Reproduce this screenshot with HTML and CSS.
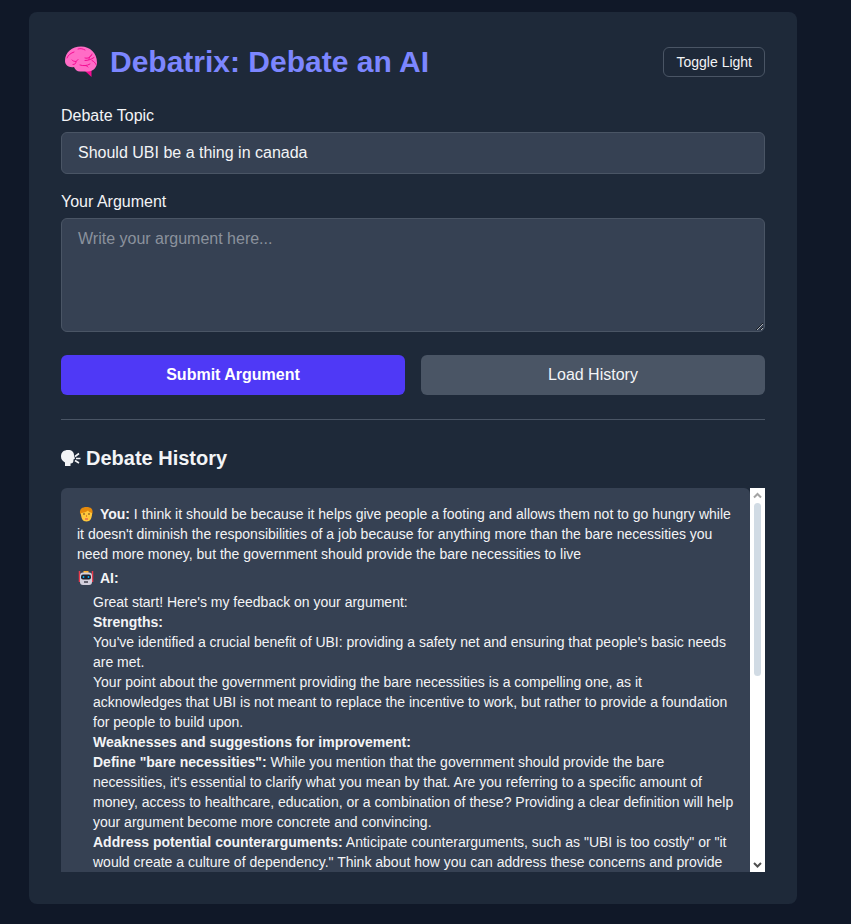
FILE: index.html
```
<!DOCTYPE html>
<html lang="en">
<head>
    <meta charset="UTF-8">
    <meta name="viewport" content="width=device-width, initial-scale=1.0">
    <title>Debatrix: Debate an AI</title>
    <link rel="stylesheet" href="styles.css">
</head>
<body>
    <main class="card">
        <header class="header">
            <h1 class="title">
                <svg class="icon-brain" viewBox="0 0 41 36" aria-hidden="true">
                    <path d="M24 27l6.500 6v-8z" fill="#f50c93"/>
                    <path d="M4 17C4 8 11 2.500 20 2.500c9 0 16 6.500 16 16 0 5-4 9-9 9H19c-3 0-5-2-6-4.500-5 1-9-2-9-6z" fill="#ff6cc6"/>
                    <path d="M6 14c1-3 4-5 7-6m4-3c3-1 5 0 7 1m7 4c-1 3-4 5-7 4m-13 2c1 1 2 1.500 4 1.500m2-2-2 2c0 2-1 3-3 3m12-4c3 0 6-1 9-3m-5 2c0-2 1-3 2-4m1 5c2 1 3 2 4 4M19 21c3 1 7 1 10-1m-5 1.500c1 0 2 .5 3 1.500" fill="none" stroke="#f50c93" stroke-width="1" stroke-linecap="round"/>
                </svg>
                Debatrix: Debate an AI
            </h1>
            <button class="toggle" type="button">Toggle Light</button>
        </header>

        <form class="form">
            <div class="field">
                <label for="topic">Debate Topic</label>
                <input class="control" id="topic" type="text" value="Should UBI be a thing in canada">
            </div>
            <div class="field">
                <label for="argument">Your Argument</label>
                <textarea class="control" id="argument" rows="4" placeholder="Write your argument here..."></textarea>
            </div>
            <div class="actions">
                <button class="button submit" type="button">Submit Argument</button>
                <button class="button load" type="button">Load History</button>
            </div>
        </form>

        <section class="history">
            <h2 class="subtitle">
                <svg class="icon-speak" viewBox="0 0 20 20" aria-hidden="true">
                    <path d="M0 8.500C0 4 3 2 7 2c4 0 6 2 6 5.500l1 3-1.500 1c0 3-1 4-3 4V18H4v-3.500C1.500 13 0 11.500 0 8.500z" fill="#f3f4f6"/>
                    <path d="M14 8.500l4-3M15 10.500h4.500M14 12.500l4 2.500" stroke="#f3f4f6" stroke-width="1.600"/>
                </svg>
                Debate History
            </h2>
            <div class="log-frame">
                <div class="log" tabindex="0">
                    <p class="speaker">
                        <svg class="icon-small" viewBox="0 0 19 16" aria-hidden="true">
                            <path d="M3 7C2.500 3 5 1 9.500 1S16 3 15.500 7l-1 3h-10z" fill="#e58a0c"/>
                            <path d="M4 7c3 0 5-1 7-2.500 1 1.500 2 2 4 2.500 0 5-1.500 8.500-5.500 8.500S4 12 4 7z" fill="#ffc83d"/>
                            <path d="M6 8h2m3 0h2" stroke="#6b4b20"/>
                            <path d="M9.500 9v2" stroke="#e98b20"/>
                            <path d="M8 13h3" stroke="#df4052"/>
                        </svg>
                        <strong>You:</strong> I think it should be because it helps give people a footing and allows them not to go hungry while it doesn't diminish the responsibilities of a job because for anything more than the bare necessities you need more money, but the government should provide the bare necessities to live
                    </p>
                    <p class="speaker">
                        <svg class="icon-small" viewBox="0 0 19 16" aria-hidden="true">
                            <path d="M2.500 1v11M15.500 1v11" stroke="#e83b4c" stroke-width="1.500"/>
                            <path d="M6.500 1h5v3h-5z" fill="#ffb02e"/>
                            <rect x="3" y="2.500" width="12" height="12.500" rx="3" fill="#d3cfdc"/>
                            <rect x="4" y="4.500" width="10" height="5" rx="2" fill="#20202b"/>
                            <path d="M6.500 6v2M11.500 6v2" stroke="#00a6ed" stroke-width="1.500"/>
                            <path d="M7 12h4" stroke="#413f4c" stroke-width="1.500"/>
                        </svg>
                        <strong>AI:</strong>
                    </p>
                    <div class="feedback">
                        <p>Great start! Here's my feedback on your argument:</p>
                        <p><strong>Strengths:</strong></p>
                        <p>You've identified a crucial benefit of UBI: providing a safety net and ensuring that people's basic needs are met.</p>
                        <p>Your point about the government providing the bare necessities is a compelling one, as it acknowledges that UBI is not meant to replace the incentive to work, but rather to provide a foundation for people to build upon.</p>
                        <p><strong>Weaknesses and suggestions for improvement:</strong></p>
                        <p><strong>Define "bare necessities":</strong> While you mention that the government should provide the bare necessities, it's essential to clarify what you mean by that. Are you referring to a specific amount of money, access to healthcare, education, or a combination of these? Providing a clear definition will help your argument become more concrete and convincing.</p>
                        <p><strong>Address potential counterarguments:</strong> Anticipate counterarguments, such as "UBI is too costly" or "it would create a culture of dependency." Think about how you can address these concerns and provide</p>
                    </div>
                </div>
                <div class="scrollbar" aria-hidden="true">
                    <svg class="arrow arrow-up" viewBox="0 0 15 15"><path d="M4 9.500L7.500 6 11 9.500"/></svg>
                    <div class="track"><div class="thumb"></div></div>
                    <svg class="arrow" viewBox="0 0 15 15"><path d="M4 6l3.500 3.500L11 6"/></svg>
                </div>
            </div>
        </section>
    </main>
</body>
</html>
```
FILE: styles.css
```
* {
    box-sizing: border-box;
}
body {
    margin: 0;
    padding: 12px 25px 20px 0;
    background-color: #101828;
    color: #f3f4f6;
    font-family: "Liberation Sans", Arial, sans-serif;
    font-size: 16px;
    line-height: 24px;
}
h1, h2, p {
    margin: 0;
}
button, input, textarea {
    font: inherit;
    color: inherit;
}
button {
    cursor: pointer;
}
.card {
    max-width: 768px;
    margin: 0 auto;
    padding: 32px;
    background-color: #1e2939;
    border-radius: 8px;
}
.header {
    display: flex;
    justify-content: space-between;
    align-items: center;
    margin-bottom: 24px;
}
.title {
    display: flex;
    align-items: center;
    gap: 8px;
    color: #7c86ff;
    font-size: 30px;
    line-height: 36px;
}
.icon-brain {
    width: 41px;
    height: 36px;
}
.toggle {
    padding: 4px 12px;
    background: none;
    border: 1px solid #4a5565;
    border-radius: 6px;
    font-size: 14px;
    line-height: 20px;
}

/* form */
.field {
    display: flex;
    flex-direction: column;
    gap: 4px;
    margin-bottom: 16px;
}
.control {
    display: block;
    width: 100%;
    padding: 8px 16px;
    background-color: #364153;
    border: 1px solid #4a5565;
    border-radius: 6px;
}
.control::placeholder {
    color: #8b929d;
}
textarea {
    resize: vertical;
}
.actions {
    display: flex;
    gap: 16px;
    margin-top: 23px;
}
.button {
    flex: 1;
    padding: 8px 16px;
    border: none;
    border-radius: 6px;
}
.submit {
    background-color: #4f39f6;
    color: #fff;
    font-weight: bold;
}
.load {
    background-color: #4a5565;
}

/* history */
.history {
    margin-top: 24px;
    padding-top: 24px;
    border-top: 1px solid #4a5565;
}
.subtitle {
    display: flex;
    align-items: center;
    gap: 5px;
    margin-bottom: 16px;
    font-size: 20px;
    line-height: 28px;
}
.icon-speak {
    width: 20px;
    height: 20px;
}
.log-frame {
    display: flex;
    height: 384px;
}
.log {
    flex: 1;
    padding: 16px;
    overflow-y: auto;
    scrollbar-width: none;
    background-color: #364153;
    border-radius: 6px 6px 0 0;
    font-size: 14px;
    line-height: 20px;
}
.speaker {
    margin-bottom: 4px;
}
.icon-small {
    width: 19px;
    height: 16px;
    vertical-align: -3px;
}
.feedback {
    padding-left: 16px;
}
.scrollbar {
    display: flex;
    flex-direction: column;
    width: 15px;
    background-color: #fff;
}
.track {
    flex: 1;
}
.thumb {
    width: 7px;
    height: 49%;
    margin: 0 auto;
    background-color: #d1dbe4;
    border-radius: 4px;
}
.arrow {
    width: 15px;
    height: 15px;
    fill: none;
    stroke: #505050;
    stroke-width: 2;
}
.arrow-up {
    stroke: #a3a3a3;
}
```
